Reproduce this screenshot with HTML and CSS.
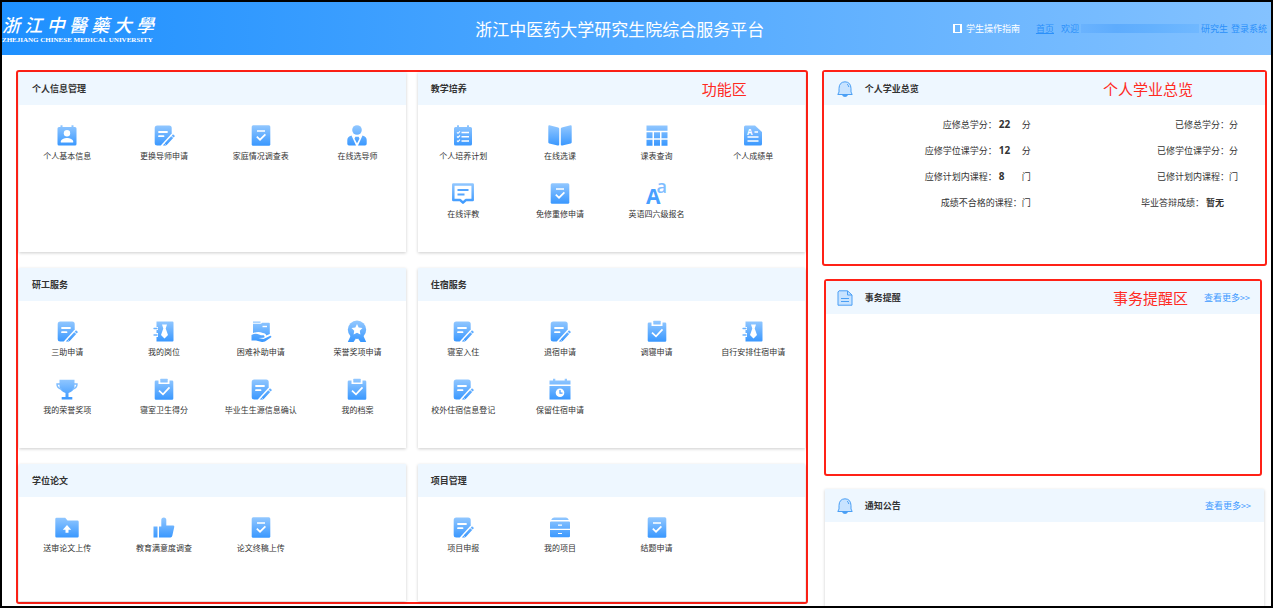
FILE: index.html
```html
<!DOCTYPE html>
<html lang="zh-CN">
<head>
<meta charset="utf-8">
<meta name="viewport" content="width=device-width, initial-scale=1">
<title>浙江中医药大学研究生院综合服务平台</title>
<link rel="stylesheet" href="styles.css">
</head>
<body>
<svg class="sprite" aria-hidden="true">
  <defs>
    <linearGradient id="blue" gradientUnits="userSpaceOnUse" x1="0" y1="1" x2="0" y2="22">
      <stop offset="0" stop-color="#93c8ff"/><stop offset="1" stop-color="#3897ff"/>
    </linearGradient>
    <symbol id="i-user" viewBox="0 0 24 24">
      <path fill="url(#blue)" d="M4 3h1.500V1.200h2V3h9V1.200h2V3H20q1.500 0 1.500 1.500v15.500q0 1.500-1.500 1.500H4q-1.500 0-1.500-1.500V4.500Q2.500 3 4 3z"/>
      <circle cx="12" cy="9.300" r="3.200" fill="#fff"/><path fill="#fff" d="M5.800 18.500v-1c0-2.200 3.700-3.500 6.200-3.500s6.200 1.300 6.200 3.500v1z"/>
    </symbol>
    <symbol id="i-edit" viewBox="0 0 24 24">
      <path fill="url(#blue)" d="M5.200 1.500h12q2.500 0 2.500 2.500v5.600L8.700 21.500H5.200q-2.500 0-2.500-2.500V4q0-2.500 2.500-2.500z"/>
      <path stroke="#fff" stroke-width="1.800" stroke-linecap="round" fill="none" d="M7 8h8M7 12.200h4.500"/>
      <path stroke="url(#blue)" stroke-width="2.700" fill="none" d="M22 11.200l-1.300 1.400M20.200 13.200l-6.700 7.200"/>
      <path fill="url(#blue)" d="M12.300 19.700l2 1.800h-3.400z"/>
    </symbol>
    <symbol id="i-check" viewBox="0 0 24 24">
      <rect x="2.700" y="1.300" width="18.600" height="20.400" rx="1.500" fill="url(#blue)"/>
      <path fill="none" stroke="#fff" stroke-width="1.700" d="M8 7h8M7.800 12.700l3.200 3 5.400-5.400"/>
    </symbol>
    <symbol id="i-advisor" viewBox="0 0 24 24">
      <circle cx="12" cy="6" r="4.800" fill="url(#blue)"/>
      <path fill="url(#blue)" d="M6.500 11.500L11 21.500H4q-1.700 0-1.700-1.700V16q0-3.500 4.200-4.500zM17.500 11.500L13 21.500h7q1.700 0 1.700-1.700V16q0-3.500-4.200-4.500zM10.300 12.700h3.400l.8 2-2.500 4.500-2.500-4.500z"/>
    </symbol>
    <symbol id="i-list" viewBox="0 0 24 24">
      <path fill="url(#blue)" d="M4.500 3H6V1.300h2V3h8V1.300h2V3h1.500q1.500 0 1.500 1.500v15.500q0 1.500-1.500 1.500h-15Q3 21.500 3 20V4.500Q3 3 4.500 3z"/>
      <path fill="none" stroke="#fff" stroke-width="1.500" d="M10.500 8.500H18M10.500 12.700H18M10.500 16.900H18"/>
      <path fill="none" stroke="#fff" stroke-width="1.100" d="M6 8.300l1 1 2-2M6 12.500l1 1 2-2M6 16.700l1 1 2-2"/>
    </symbol>
    <symbol id="i-book" viewBox="0 0 24 24">
      <path fill="url(#blue)" d="M1.500 1.300Q.3 1 .3 2.500v15.800q0 1 1 1.200l8.400 2q1.500.3 1.500-1V4.800q0-1-1-1.300zM22.500 1.300q1.200-.3 1.200 1.200v15.800q0 1-1 1.200l-8.400 2q-1.500.3-1.500-1V4.800q0-1 1-1.300z"/>
    </symbol>
    <symbol id="i-table" viewBox="0 0 24 24">
      <path fill="url(#blue)" d="M1.500 1.500h21v5.300h-21zM1.500 8.200h6v6h-6zM9 8.200h6v6H9zM16.500 8.200h6v6h-6zM1.500 15.700h6v6h-6zM9 15.700h6v6H9zM16.500 15.700h6v6h-6z"/>
    </symbol>
    <symbol id="i-report" viewBox="0 0 24 24">
      <path fill="url(#blue)" d="M4.500 1.500H14l7 6.500v12q0 1.500-1.500 1.500h-15Q3 21.500 3 20V3q0-1.500 1.500-1.500z"/>
      <text x="6" y="10.500" font-size="8" font-weight="700" fill="#fff">A</text>
      <path stroke="#fff" stroke-width="1.500" fill="none" d="M13.500 8h3.500M6.500 13h11M6.500 17h11"/>
    </symbol>
    <symbol id="i-comment" viewBox="0 0 24 24">
      <path fill="none" stroke="url(#blue)" stroke-width="2.500" stroke-linejoin="round" d="M2.300 2.600h19.400v15.500h-6.900L12 20.700l-2.800-2.600H2.300z"/>
      <path fill="none" stroke="#55a6ff" stroke-width="2" d="M6.500 8h11M6.500 12.500h7"/>
    </symbol>
    <symbol id="i-letters" viewBox="0 0 24 24">
      <text x="1" y="21.500" font-size="21" font-weight="700" fill="#489fff">A</text>
      <text x="11.500" y="11" font-size="18" font-weight="600" fill="#80bdff">a</text>
    </symbol>
    <symbol id="i-tie" viewBox="0 0 24 24">
      <path fill="url(#blue)" d="M4.500 1.500h16q1 0 1 1v18q0 1-1 1h-16V17H6v-4H4.500v-3H6V7H4.500z"/>
      <path fill="#fff" d="M10 4.500h5l-1.300 4 2.300 6.500-3.500 3.500L9 15l2.300-6.500z"/>
      <path stroke="#6bb3ff" stroke-width="1.300" stroke-linecap="round" fill="none" d="M2 8.500h3M2 15h3"/>
    </symbol>
    <symbol id="i-hand" viewBox="0 0 24 24">
      <path fill="url(#blue)" d="M4 1.500h7.500v1.200H4zM4 3.800h8l1.200-1H20q.8 0 .8.800V14l-3.500 1.600q-.6-2.600-3.500-2.600-4.300-1.800-9.800 0z"/>
      <path stroke="#fff" stroke-width="1.400" fill="none" d="M13.500 6.500H18"/>
      <path fill="url(#blue)" d="M2.500 15q4-2.300 7.500-.5l2 .8h2.800q1.800 1.800-.6 2.500l-4.700.2 5 1 6.800-3.300q1.400.2.900 1.500L16 21.500q-2 .8-4 .3l-5-1.300H2.500z"/>
    </symbol>
    <symbol id="i-medal" viewBox="0 0 24 24">
      <path fill="url(#blue)" d="M5.500 16l5.500 2.500L8.500 22H2.800zM18.500 16L13 18.500l2.500 3.500h5.700z"/>
      <circle cx="12" cy="9.700" r="9.200" fill="url(#blue)"/>
      <path fill="#fff" d="M12 4l1.700 3.500 3.800.6-2.700 2.700.6 3.800-3.400-1.800-3.400 1.800.6-3.800-2.700-2.700 3.800-.6z"/>
    </symbol>
    <symbol id="i-trophy" viewBox="0 0 24 24">
      <path fill="url(#blue)" d="M4.500 1.800h15v6.700q-1 5-6 6.500v4h3.800v2.500H6.700V19h3.800v-4q-5-1.500-6-6.500z"/>
      <path fill="none" stroke="#7dbcff" stroke-width="1.400" d="M5 6H2q-.2 4 4.500 5.200M19 6h3q.2 4-4.500 5.200"/>
    </symbol>
    <symbol id="i-clip" viewBox="0 0 24 24">
      <path fill="url(#blue)" d="M4 2.500h2.500V6h11V2.500H20q1.300 0 1.300 1.300v16.700q0 1.300-1.300 1.300H4q-1.300 0-1.300-1.300V3.800Q2.700 2.500 4 2.500z"/>
      <rect x="8.300" y=".7" width="7.400" height="3.800" rx=".5" fill="url(#blue)"/>
      <path fill="none" stroke="#fff" stroke-width="1.700" d="M7 12.700l4 3.700 6.500-7"/>
    </symbol>
    <symbol id="i-calendar" viewBox="0 0 24 24">
      <path fill="url(#blue)" d="M1.500 2.500H5V.8h2.300v1.700h9.400V.8H19v1.700h3.500v4h-21zM1.500 8h21v13.500h-21z"/>
      <circle cx="12" cy="14.700" r="4.300" fill="#fff"/><path fill="none" stroke="#489fff" stroke-width="1.200" d="M12 12v3.200h2.500"/>
    </symbol>
    <symbol id="i-upload" viewBox="0 0 24 24">
      <path fill="url(#blue)" d="M1.500 1.700h8.700l2.300 2.800h10q1.200 0 1.200 1.200v14.500q0 1.200-1.200 1.200h-21Q.3 21.400.3 20.200V2.900q0-1.200 1.200-1.200z"/>
      <path fill="#fff" d="M12 9l4.200 4.700h-2.700v3h-3v-3H7.800z"/>
    </symbol>
    <symbol id="i-thumb" viewBox="0 0 24 24">
      <path fill="url(#blue)" d="M1.500 10.500h4v11h-4zM7 10.500h2.300V4q0-2.500 2.500-2.500t2.500 2.500v5.500H21q1.500 0 1.300 1.300l-2 9q-.4 1.700-1.800 1.700H7z"/>
    </symbol>
    <symbol id="i-drawer" viewBox="0 0 24 24">
      <path fill="url(#blue)" d="M6 1.500h12q2 0 2.800 2.500H3.200Q4 1.500 6 1.500zM3 5.500h18q1 0 1 1V12.700H2V6.500q0-1 1-1zM2 14h20v6q0 1.300-1.300 1.300H3.300Q2 21.300 2 20z"/>
      <path stroke="#fff" stroke-width="1.200" d="M10 9.200h4M10 17.500h4"/>
    </symbol>
    <symbol id="i-bell" viewBox="0 0 16 16">
      <path fill="#c8e3ff" stroke="#4a9ff5" stroke-linejoin="round" d="M2 11V7.500Q2.200 1 8 .8q5.800.2 6 6.700V11l1.200 2.500H.8z"/>
      <path fill="#4a9ff5" d="M5 14h6q-1 2-3 2t-3-2z"/><path fill="none" stroke="#4a9ff5" d="M10 3.200q1.600.8 1.800 2.800"/>
    </symbol>
    <symbol id="i-note" viewBox="0 0 16 16">
      <path fill="#c8e3ff" stroke="#4a9ff5" stroke-linejoin="round" d="M2 .8h8.500L15 5v10.200H1V2z"/>
      <path fill="none" stroke="#4a9ff5" d="M10.500 1v4H15M4 8.500h8M4 11.500h8"/>
    </symbol>
  </defs>
</svg>

<div class="page">
  <header class="topbar">
    <div class="logo">
      <div class="logo-cn"><span>浙</span><span>江</span><span>中</span><span>醫</span><span>藥</span><span>大</span><span>學</span></div>
      <div class="logo-en">ZHEJIANG CHINESE MEDICAL UNIVERSITY</div>
    </div>
    <h1 class="title">浙江中医药大学研究生院综合服务平台</h1>
    <nav class="nav">
      <a class="guide" href="#"><span class="guide-icon"></span>学生操作指南</a>
      <a class="home" href="#">首页</a>
      <span class="welcome">欢迎<span class="masked"></span>研究生</span>
      <a class="login" href="#">登录系统</a>
    </nav>
  </header>

  <main class="main">
    <div class="modules marked">
      <section class="panel">
        <div class="panel-head"><h2>个人信息管理</h2></div>
        <div class="apps">
          <a href="#"><svg><use href="#i-user"/></svg>个人基本信息</a>
          <a href="#"><svg><use href="#i-edit"/></svg>更换导师申请</a>
          <a href="#"><svg><use href="#i-check"/></svg>家庭情况调查表</a>
          <a href="#"><svg><use href="#i-advisor"/></svg>在线选导师</a>
        </div>
      </section>
      <section class="panel">
        <div class="panel-head"><h2>教学培养</h2><span class="mark mark-modules">功能区</span></div>
        <div class="apps">
          <a href="#"><svg><use href="#i-list"/></svg>个人培养计划</a>
          <a href="#"><svg><use href="#i-book"/></svg>在线选课</a>
          <a href="#"><svg><use href="#i-table"/></svg>课表查询</a>
          <a href="#"><svg><use href="#i-report"/></svg>个人成绩单</a>
          <a href="#"><svg><use href="#i-comment"/></svg>在线评教</a>
          <a href="#"><svg><use href="#i-check"/></svg>免修重修申请</a>
          <a href="#"><svg><use href="#i-letters"/></svg>英语四六级报名</a>
        </div>
      </section>
      <section class="panel">
        <div class="panel-head"><h2>研工服务</h2></div>
        <div class="apps">
          <a href="#"><svg><use href="#i-edit"/></svg>三助申请</a>
          <a href="#"><svg><use href="#i-tie"/></svg>我的岗位</a>
          <a href="#"><svg><use href="#i-hand"/></svg>困难补助申请</a>
          <a href="#"><svg><use href="#i-medal"/></svg>荣誉奖项申请</a>
          <a href="#"><svg><use href="#i-trophy"/></svg>我的荣誉奖项</a>
          <a href="#"><svg><use href="#i-clip"/></svg>寝室卫生得分</a>
          <a href="#"><svg><use href="#i-edit"/></svg>毕业生生源信息确认</a>
          <a href="#"><svg><use href="#i-clip"/></svg>我的档案</a>
        </div>
      </section>
      <section class="panel">
        <div class="panel-head"><h2>住宿服务</h2></div>
        <div class="apps">
          <a href="#"><svg><use href="#i-edit"/></svg>寝室入住</a>
          <a href="#"><svg><use href="#i-edit"/></svg>退宿申请</a>
          <a href="#"><svg><use href="#i-clip"/></svg>调寝申请</a>
          <a href="#"><svg><use href="#i-tie"/></svg>自行安排住宿申请</a>
          <a href="#"><svg><use href="#i-edit"/></svg>校外住宿信息登记</a>
          <a href="#"><svg><use href="#i-calendar"/></svg>保留住宿申请</a>
        </div>
      </section>
      <section class="panel">
        <div class="panel-head"><h2>学位论文</h2></div>
        <div class="apps">
          <a href="#"><svg><use href="#i-upload"/></svg>送审论文上传</a>
          <a href="#"><svg><use href="#i-thumb"/></svg>教育满意度调查</a>
          <a href="#"><svg><use href="#i-check"/></svg>论文终稿上传</a>
        </div>
      </section>
      <section class="panel">
        <div class="panel-head"><h2>项目管理</h2></div>
        <div class="apps">
          <a href="#"><svg><use href="#i-edit"/></svg>项目申报</a>
          <a href="#"><svg><use href="#i-drawer"/></svg>我的项目</a>
          <a href="#"><svg><use href="#i-check"/></svg>结题申请</a>
        </div>
      </section>
    </div>

    <aside class="side">
      <section class="marked overview">
        <div class="panel-head side-head"><svg><use href="#i-bell"/></svg><h2>个人学业总览</h2><span class="mark mark-overview">个人学业总览</span></div>
        <div class="stats">
          <p>应修总学分：<b>22</b>分</p><p>已修总学分：分</p>
          <p>应修学位课学分：<b>12</b>分</p><p>已修学位课学分：分</p>
          <p>应修计划内课程：<b>8</b>门</p><p>已修计划内课程：门</p>
          <p>成绩不合格的课程：门</p><p>毕业答辩成绩：<b class="result">暂无</b></p>
        </div>
      </section>
      <section class="marked reminder">
        <div class="panel-head side-head"><svg><use href="#i-note"/></svg><h2>事务提醒</h2><span class="mark">事务提醒区</span><a class="more" href="#">查看更多&gt;&gt;</a></div>
      </section>
      <section class="panel notice">
        <div class="panel-head side-head"><svg><use href="#i-bell"/></svg><h2>通知公告</h2><a class="more" href="#">查看更多&gt;&gt;</a></div>
      </section>
    </aside>
  </main>
</div>
</body>
</html>
```
FILE: styles.css
```css
* { box-sizing: border-box; }

body {
  margin: 0;
  background: #fff;
  color: #333;
  font-family: "Noto Sans CJK SC", sans-serif;
  font-size: 9px;
}

h1, h2, p { margin: 0; }
a { color: inherit; text-decoration: none; }
.sprite { position: absolute; width: 0; height: 0; }

.sprite text { font-family: "Open Sans", sans-serif; }

.page {
  display: flex;
  flex-direction: column;
  min-height: 100vh;
  border: 2px solid #000;
}

/* top bar */
.topbar {
  display: grid;
  grid-template-columns: 16fr auto 17fr;
  align-items: center;
  height: 53px;
  padding-right: 4px;
  background: linear-gradient(90deg, #1e90ff, #84c2ff);
  color: #fff;
}

.logo { width: 152px; }

.logo-cn {
  display: flex;
  justify-content: space-between;
  font-size: 18px;
  font-style: italic;
  font-weight: 500;
  line-height: 22px;
}

.logo-en {
  font-family: "Liberation Serif", serif;
  font-size: 7px;
  font-weight: 700;
  line-height: 10px;
  white-space: nowrap;
}

.title {
  font-size: 17px;
  font-weight: 400;
  line-height: 24px;
  white-space: nowrap;
}

.nav {
  display: flex;
  justify-content: flex-end;
  align-items: center;
  line-height: 14px;
  white-space: nowrap;
  color: #2b90fa;
}

.guide {
  display: flex;
  align-items: center;
  gap: 4px;
  margin-right: 16px;
  color: #fff;
}

.guide-icon {
  width: 9px;
  height: 9px;
  border: solid #fff;
  border-width: 1px 2px;
}

.home { margin-right: 7px; text-decoration: underline; }

.welcome {
  display: flex;
  align-items: center;
  gap: 2px;
  margin-right: 3px;
}

.masked {
  width: 118px;
  height: 9px;
  background: linear-gradient(90deg, #6ab3fe, #5eacfd 30%, #64b1fe 60%, #70b8ff);
}

/* main area */
.main {
  display: grid;
  grid-template-columns: 16fr 9fr;
  gap: 14px;
  flex: 1;
  padding: 15px 4px 0 14px;
}

.marked { border: 2px solid #ff2116; border-radius: 3px; }

.modules {
  display: grid;
  grid-template-columns: 1fr 1fr;
  grid-template-rows: minmax(180px, auto) minmax(180px, auto) minmax(137px, 1fr);
  gap: 16px 12px;
  margin-bottom: 2px;
  padding: 0 1px 1px;
}

.panel { background: #fff; box-shadow: 0 1px 3px rgba(0, 0, 0, 0.2); }

.panel-head {
  display: flex;
  align-items: center;
  height: 33px;
  padding: 0 13px;
  background: #eef7ff;
}

.panel-head h2 {
  margin-right: auto;
  font-size: 9px;
  font-weight: 700;
  line-height: 13px;
}

.mark { color: #ff2a1f; font-size: 15px; line-height: 21px; }
.mark-modules { margin-right: 45px; }
.mark-overview { margin-right: 62px; }

.apps {
  display: grid;
  grid-template-columns: repeat(4, 1fr);
  gap: 18px 0;
  padding: 19px 0;
}

.panel:nth-child(even) .apps { margin: 0 3px 0 -3px; }

.apps a {
  display: flex;
  flex-direction: column;
  align-items: center;
  font-size: 8px;
  line-height: 16px;
  white-space: nowrap;
}

.apps svg { width: 24px; height: 24px; }

/* right column */
.side { display: flex; flex-direction: column; gap: 13px; }
.overview { min-height: 196px; }
.reminder { min-height: 197px; margin: 0 5px 0 2px; }
.notice { flex: 1; margin: 0 3px; }

.side-head { padding: 0 10px 0 13px; }
.reminder .side-head { padding-left: 11px; }
.notice .side-head { padding: 0 13px 0 12px; }
.side-head svg { width: 16px; height: 16px; margin-right: 12px; }
.side-head .mark + .more { margin-left: 16px; }
.more { color: #3d9aff; }

.stats {
  display: grid;
  grid-template-columns: 1fr 1fr;
  padding: 7px 27px 7px 0;
  line-height: 26px;
  text-align: right;
}

.stats p { height: 26px; }

.stats b {
  display: inline-block;
  width: 23px;
  margin-left: 2px;
  font-family: "Open Sans", "Noto Sans CJK SC", sans-serif;
  font-size: 10px;
  line-height: 12px;
  text-align: left;
}

.stats .result { width: 32px; font-size: 9px; }
```
